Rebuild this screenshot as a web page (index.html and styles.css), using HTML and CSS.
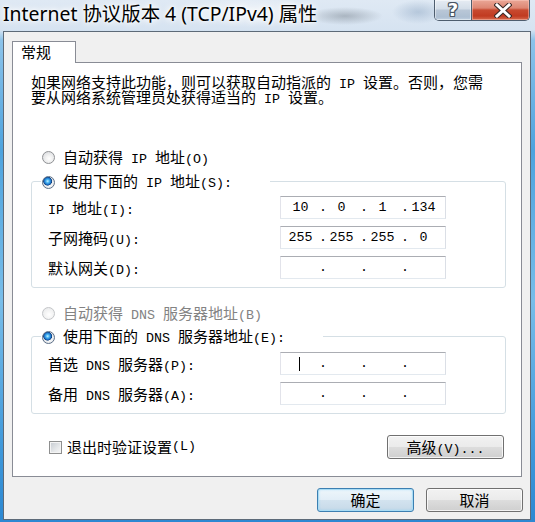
FILE: index.html
```html
<!DOCTYPE html>
<html lang="zh-CN">
<head>
<meta charset="utf-8">
<title>Internet 协议版本 4 (TCP/IPv4) 属性</title>
<link rel="stylesheet" href="styles.css">
</head>
<body>
<div class="window">
  <div class="titlebar">
    <div class="title">Internet 协议版本 4 (TCP/IPv4) 属性</div>
    <div class="caption">
      <div class="cbtn help"><span class="q">?</span></div>
      <div class="cbtn close">
        <svg width="18" height="15" viewBox="0 0 18 15">
          <path d="M3 2 L15 13 M15 2 L3 13" stroke="#3a2a28" stroke-width="5" stroke-linecap="square"/>
          <path d="M3 2 L15 13 M15 2 L3 13" stroke="#ffffff" stroke-width="3" stroke-linecap="square"/>
        </svg>
      </div>
    </div>
  </div>
  <div class="client">
    <div class="tabs"><div class="tab">常规</div></div>
    <div class="panel">
      <p class="intro">如果网络支持此功能，则可以获取自动指派的<span class="a"> IP </span>设置。否则，您需<br>要从网络系统管理员处获得适当的<span class="a"> IP </span>设置。</p>

      <div class="radio-row"><span class="radio"></span><span>自动获得<span class="a"> IP </span>地址<span class="a">(O)</span></span></div>

      <fieldset class="group">
        <legend class="legend lg-ip"><span class="radio on"></span>使用下面的<span class="a"> IP </span>地址<span class="a">(S):</span></legend>
        <div class="fields fields-ip">
          <div class="lbl"><span class="a">IP </span>地址<span class="a">(I):</span></div>
          <div class="ipbox"><span class="oct">10</span><span class="dot">.</span><span class="oct">0</span><span class="dot">.</span><span class="oct">1</span><span class="dot">.</span><span class="oct">134</span></div>
          <div class="lbl">子网掩码<span class="a">(U):</span></div>
          <div class="ipbox"><span class="oct">255</span><span class="dot">.</span><span class="oct">255</span><span class="dot">.</span><span class="oct">255</span><span class="dot">.</span><span class="oct">0</span></div>
          <div class="lbl">默认网关<span class="a">(D):</span></div>
          <div class="ipbox"><span class="oct"></span><span class="dot">.</span><span class="oct"></span><span class="dot">.</span><span class="oct"></span><span class="dot">.</span><span class="oct"></span></div>
        </div>
      </fieldset>

      <div class="radio-row radio-row-dns disabled"><span class="radio off"></span><span>自动获得<span class="a"> DNS </span>服务器地址<span class="a">(B)</span></span></div>

      <fieldset class="group group-dns">
        <legend class="legend lg-dns"><span class="radio on"></span>使用下面的<span class="a"> DNS </span>服务器地址<span class="a">(E):</span></legend>
        <div class="fields fields-dns">
          <div class="lbl">首选<span class="a"> DNS </span>服务器<span class="a">(P):</span></div>
          <div class="ipbox"><span class="oct"><span class="caret"></span></span><span class="dot">.</span><span class="oct"></span><span class="dot">.</span><span class="oct"></span><span class="dot">.</span><span class="oct"></span></div>
          <div class="lbl">备用<span class="a"> DNS </span>服务器<span class="a">(A):</span></div>
          <div class="ipbox"><span class="oct"></span><span class="dot">.</span><span class="oct"></span><span class="dot">.</span><span class="oct"></span><span class="dot">.</span><span class="oct"></span></div>
        </div>
      </fieldset>

      <div class="check-row">
        <label class="check"><span class="box"></span>退出时验证设置<span class="a">(L)</span></label>
        <button class="btn btn-adv">高级<span class="a">(V)...</span></button>
      </div>
    </div>
    <div class="actions">
      <button class="btn btn-main default">确定</button>
      <button class="btn btn-main">取消</button>
    </div>
  </div>
</div>
</body>
</html>
```
FILE: styles.css
```css
html, body {
  margin: 0;
  padding: 0;
}
body {
  width: 535px;
  height: 522px;
  overflow: hidden;
  font-family: "Noto Sans CJK SC", sans-serif;
  font-size: 15px;
  line-height: 20px;
  color: #000;
  background:
    radial-gradient(ellipse 38px 9px at 345px 16px, rgba(80, 90, 100, 0.35), rgba(80, 90, 100, 0) 100%),
    radial-gradient(ellipse 26px 12px at 418px 12px, rgba(110, 140, 175, 0.35), rgba(110, 140, 175, 0) 100%),
    radial-gradient(ellipse 60px 16px at 250px 12px, rgba(255, 255, 255, 0.6), rgba(255, 255, 255, 0) 100%),
    linear-gradient(180deg, #dfe9f4 0px, #d6e3f1 30px, #8cc3ea 40px, #4ea3de 150px, #78bde9 300px, #3f98da 450px, #2c88d2 522px);
}
.window {
  display: flex;
  flex-direction: column;
  height: 522px;
  padding: 0 4px 0 3px;
  box-sizing: border-box;
}

/* title bar */
.titlebar {
  height: 31px;
  display: flex;
  justify-content: space-between;
  align-items: flex-start;
}
.title {
  font-family: "Noto Sans", "Noto Sans CJK SC", sans-serif;
  font-size: 19.4px;
  line-height: 28px;
  color: #000;
  white-space: nowrap;
  text-shadow: 0 0 6px #fff, 0 0 10px #fff, 0 0 3px #fff;
}
.caption {
  display: flex;
  height: 21px;
  margin-right: 1px;
  border: 1px solid #4e5d6e;
  border-top: none;
  border-radius: 0 0 5px 5px;
  overflow: hidden;
  box-sizing: border-box;
}
.cbtn {
  display: flex;
  align-items: center;
  justify-content: center;
  height: 20px;
}
.help {
  width: 36px;
  border-right: 1px solid #4e5d6e;
  background: linear-gradient(180deg, #e6ecf3 0%, #d3dde8 45%, #b9c7d7 50%, #aebfd2 85%, #c3d2e2 100%);
  box-shadow: inset 0 0 0 1px rgba(255, 255, 255, 0.45);
}
.q {
  font-family: "DejaVu Sans", sans-serif;
  font-weight: bold;
  font-size: 18px;
  line-height: 20px;
  color: #fff;
  text-shadow: 1px 0 0 #4a5563, -1px 0 0 #4a5563, 0 1px 0 #4a5563, 0 -1px 0 #4a5563, 1px 1px 0 #4a5563, -1px -1px 0 #4a5563, 1px -1px 0 #4a5563, -1px 1px 0 #4a5563;
}
.close {
  width: 57px;
  background: linear-gradient(180deg, #eaa797 0%, #dd8673 40%, #c84a30 50%, #c13b21 80%, #d76a4e 100%);
  box-shadow: inset 0 0 0 1px rgba(255, 210, 200, 0.45);
}
.close svg {
  display: block;
  margin-left: 4px;
}

/* client area */
.client {
  width: 528px;
  height: 489px;
  box-sizing: border-box;
  border: 1px solid #5d6a78;
  background: #f0f0f0;
  padding: 9px 8px 7px 8px;
  display: flex;
  flex-direction: column;
}
.tabs {
  display: flex;
  height: 22px;
  margin-bottom: -1px;
  position: relative;
  z-index: 1;
}
.tab {
  width: 64px;
  box-sizing: border-box;
  border: 1px solid #898c95;
  border-bottom: none;
  background: #fff;
  padding-left: 8px;
  line-height: 20px;
  font-size: 15px;
}
.panel {
  height: 415px;
  box-sizing: border-box;
  border: 1px solid #898c95;
  background: #fff;
  display: flex;
  flex-direction: column;
}
.a {
  font-family: "Liberation Mono", monospace;
  font-size: 13.33px;
  line-height: 0;
  white-space: pre;
}
.intro {
  margin: 11px 0 0 18px;
  line-height: 15px;
  height: 29px;
  white-space: nowrap;
}
.radio-row {
  display: flex;
  align-items: center;
  height: 20px;
  margin-top: 44px;
  padding-left: 29px;
  white-space: nowrap;
}
.radio-row-dns {
  margin-top: 15px;
}
.disabled {
  color: #838383;
}
.radio {
  display: inline-block;
  width: 13px;
  height: 13px;
  box-sizing: border-box;
  border-radius: 50%;
  border: 1px solid #8f9194;
  background: radial-gradient(circle at 55% 60%, #ffffff 0%, #f2f2f2 35%, #d3d6da 100%);
  margin-right: 8px;
  vertical-align: -2px;
  flex: none;
}
.radio.on {
  border-color: #5d7088;
  background:
    radial-gradient(circle at 42% 38%, #c8f3ff 0%, #49b5f2 18%, #1a6fc6 36%, #0e3f7c 44%, rgba(14, 63, 124, 0) 50%),
    radial-gradient(circle at 55% 60%, #ffffff 0%, #eef0f2 40%, #c9cdd2 100%);
}
.radio.off {
  border-color: #c3c5c8;
  background: radial-gradient(circle at 55% 60%, #ffffff 0%, #f5f5f5 40%, #e4e6e8 100%);
}

/* group boxes */
.group {
  margin: 4px 0 0 18px;
  padding: 0 0 8px 0;
  width: 475px;
  box-sizing: border-box;
  border: 1px solid #d5dfe5;
  border-radius: 3px;
  min-inline-size: 0;
}
.group-dns {
  margin-top: 3px;
}
.legend {
  margin-left: 9px;
  padding: 0 0 0 1px;
  height: 20px;
  line-height: 20px;
  box-sizing: border-box;
  white-space: nowrap;
}
.lg-ip { width: 229px; }
.lg-dns { width: 282px; }
.fields {
  display: grid;
  grid-template-columns: 232px 166px;
  grid-auto-rows: 23px;
  row-gap: 7px;
  padding: 5px 0 0 16px;
  align-items: center;
}
.fields-dns {
  padding-top: 6px;
}
.lbl {
  white-space: nowrap;
  line-height: 20px;
}
.ipbox {
  width: 166px;
  height: 23px;
  box-sizing: border-box;
  border: 1px solid;
  border-color: #abadb3 #dbdfe6 #e3e9ef #e2e3ea;
  background: #fff;
  display: flex;
  align-items: center;
  padding-left: 3px;
  font-family: "Liberation Mono", monospace;
  font-size: 13.33px;
  line-height: 21px;
}
.oct {
  width: 33px;
  text-align: center;
  display: flex;
  justify-content: center;
  align-items: center;
  height: 21px;
}
.dot {
  width: 8px;
  padding-left: 2px;
  box-sizing: content-box;
  margin-right: -2px;
}
.caret {
  display: inline-block;
  width: 1px;
  height: 14px;
  background: #000;
  margin-right: 2px;
}

/* bottom of panel */
.check-row {
  display: flex;
  justify-content: space-between;
  align-items: center;
  height: 24px;
  margin: 21px 17px 0 36px;
}
.check {
  display: flex;
  align-items: center;
  white-space: nowrap;
}
.box {
  width: 13px;
  height: 13px;
  box-sizing: border-box;
  border: 1px solid #8e8f8f;
  background: linear-gradient(135deg, #c5cad0 0%, #e6e8ea 60%, #f7f7f7 100%);
  box-shadow: inset 0 0 0 1px #f4f4f4;
  margin-right: 5px;
}
.btn {
  height: 24px;
  box-sizing: border-box;
  border: 1px solid #707070;
  border-radius: 3px;
  background: linear-gradient(180deg, #f2f2f2 0%, #ebebeb 48%, #dddddd 50%, #cfcfcf 100%);
  box-shadow: inset 0 0 0 1px rgba(255, 255, 255, 0.75);
  font-family: "Noto Sans CJK SC", sans-serif;
  font-size: 15px;
  color: #000;
  padding: 0;
  line-height: 20px;
}
.btn-adv {
  width: 117px;
}
.actions {
  display: flex;
  justify-content: flex-end;
  gap: 12px;
  margin: 11px -1px 0 0;
}
.btn-main {
  width: 97px;
}
.btn.default {
  border-color: #3c7fb1;
  background: linear-gradient(180deg, #eef6fb 0%, #e2eef7 48%, #d3e3ef 50%, #c6d9e8 100%);
  box-shadow: inset 0 0 0 1px #a8dcf5, inset 0 0 3px rgba(72, 190, 250, 0.6);
}
```
